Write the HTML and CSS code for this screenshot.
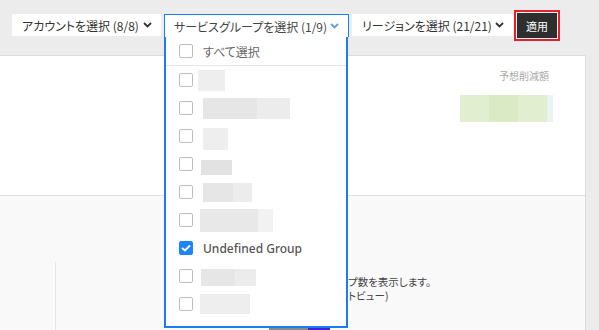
FILE: index.html
```html
<!DOCTYPE html>
<html lang="ja">
<head>
  <meta charset="UTF-8">
  <title>コスト削減</title>
  <link rel="stylesheet" href="styles.css">
</head>
<body>
  <div class="page">
    <div class="main">
      <div class="toolbar">
        <div class="select account">
          <span>アカウントを選択 (8/8)</span>
          <svg class="chev" width="9" height="6" viewBox="0 0 9 6"><polyline points="1,1 4.5,4.5 8,1" fill="none" stroke="#333" stroke-width="1.8"/></svg>
        </div>
        <div class="select group open">
          <span>サービスグループを選択 (1/9)</span>
          <svg class="chev" width="9" height="6" viewBox="0 0 9 6"><polyline points="1,1 4.5,4.5 8,1" fill="none" stroke="#5aa0ec" stroke-width="1.8"/></svg>
          <div class="panel">
            <div class="opt all">
              <span class="box"></span>
              <span class="lbl">すべて選択</span>
            </div>
            <div class="list">
              <div class="opt"><span class="box"></span><span class="blur" style="width:27px;height:21px;margin-left:-5px"></span></div>
              <div class="opt"><span class="box"></span><span class="blur b2" style="width:87px;height:21px"></span></div>
              <div class="opt"><span class="box"></span><span class="blur" style="width:25px;height:22px;margin-top:6px"></span></div>
              <div class="opt"><span class="box"></span><span class="blur dk" style="width:31px;height:15px;margin-top:6px;margin-left:-2px"></span></div>
              <div class="opt"><span class="box"></span><span class="blur b2" style="width:49px;height:19px"></span></div>
              <div class="opt"><span class="box"></span><span class="blur b3" style="width:73px;height:23px;margin-left:-3px"></span></div>
              <div class="opt"><span class="box checked"><svg width="10" height="8" viewBox="0 0 10 8"><polyline points="1,4 4,6.5 9,1.5" fill="none" stroke="#fff" stroke-width="2"/></svg></span><span class="lbl strong">Undefined Group</span></div>
              <div class="opt"><span class="box"></span><span class="blur b2" style="width:55px;height:17px;margin-top:2px;margin-left:-2px"></span></div>
              <div class="opt"><span class="box"></span><span class="blur" style="width:50px;height:20px;margin-left:-3px"></span></div>
            </div>
          </div>
        </div>
        <div class="select region">
          <span>リージョンを選択 (21/21)</span>
          <svg class="chev" width="9" height="6" viewBox="0 0 9 6"><polyline points="1,1 4.5,4.5 8,1" fill="none" stroke="#333" stroke-width="1.8"/></svg>
        </div>
        <button class="apply">適用</button>
      </div>

      <div class="summary">
        <div class="saving">
          <div class="saving-label">予想削減額</div>
          <div class="saving-value">
            <span class="seg s1"></span><span class="seg s2"></span><span class="seg s1"></span><span class="seg s3"></span>
          </div>
        </div>
      </div>

      <div class="detail">
        <div class="side"></div>
        <div class="content">
          <div class="desc">
            <p>プ数を表示します。</p>
            <p>トビュー)</p>
          </div>
          <div class="switch">
            <span class="sw off"></span><span class="sw on"></span>
          </div>
        </div>
      </div>
    </div>
  </div>
</body>
</html>
```

FILE: styles.css
```css
html,
body {
    padding: 0;
    margin: 0;
}

body {
    background: #ececec;
    font-family: "Noto Sans CJK JP", "Noto Sans", sans-serif;
    font-size: 12px;
    color: #333;
    font-feature-settings: "palt";
}

.page {
    height: 330px;
    overflow: hidden;
}

.main {
    width: 586px;
    height: 330px;
    display: flex;
    flex-direction: column;
}

.toolbar {
    height: 56px;
    flex: none;
    box-sizing: border-box;
    padding: 14px 0 0 12px;
    display: flex;
    align-items: flex-start;
    gap: 3px;
    border-bottom: 1px solid #dcdcdc;
}

.select {
    height: 22px;
    box-sizing: border-box;
    background: #fff;
    display: flex;
    align-items: center;
    padding: 0 9px 0 10px;
    white-space: nowrap;
    position: relative;
}

.select .chev {
    margin-left: auto;
}

.account {
    width: 149px;
}

.group {
    width: 185px;
    height: 23px;
    border: 1px solid #1a7ef2;
    border-bottom: none;
    padding-left: 9px;
    color: #444;
}

.region {
    width: 161px;
}

.apply {
    width: 46px;
    height: 31px;
    margin: -4px 0 0 -2px;
    border: 2px solid #e3202b;
    padding: 0;
    background: #2e2e2e;
    box-shadow: inset 0 0 0 1px #f2f2f2;
    color: #fff;
    font-family: inherit;
    font-size: 11px;
}

/* dropdown */
.panel {
    position: absolute;
    top: 22px;
    left: -1px;
    width: 184px;
    height: 291px;
    box-sizing: border-box;
    background: #fff;
    border: 2px solid #1a7ef2;
    border-top: none;
    z-index: 5;
}

.opt {
    height: 28px;
    display: flex;
    align-items: center;
    padding-left: 13px;
    gap: 10px;
}

.opt.all {
    border-bottom: 1px solid #e6e6e6;
    height: 28px;
}

.box {
    width: 14px;
    height: 14px;
    box-sizing: border-box;
    border: 1px solid #bdbdbd;
    border-radius: 2px;
    flex: none;
    display: flex;
    align-items: center;
    justify-content: center;
}

.box.checked {
    background: #1a85ff;
    border-color: #1a85ff;
}

.lbl {
    color: #666;
    font-size: 12px;
}

.lbl.strong {
    color: #555;
    font-family: "Noto Sans", sans-serif;
    font-weight: 500;
}

.blur {
    background: #eeeeee;
}

.blur.dk {
    background: #e2e2e2;
}

.blur.b2 {
    background: linear-gradient(90deg, #e6e6e6 0 62%, #ececec 62%);
}

.blur.b3 {
    background: linear-gradient(90deg, #e8e8e8 0 80%, #f2f2f3 80%);
}

/* summary card */
.summary {
    height: 139px;
    flex: none;
    background: #fff;
    border-right: 1px solid #dcdcdc;
    border-bottom: 1px solid #dcdcdc;
    display: flex;
    justify-content: flex-end;
}

.saving {
    padding: 12px 32px 0 0;
    display: flex;
    flex-direction: column;
    align-items: flex-end;
}

.saving-label {
    font-size: 10px;
    color: #aaa;
    margin-right: 4px;
}

.saving-value {
    margin-top: 12px;
    display: flex;
    height: 27px;
}

.seg {
    width: 29px;
}

.s1 {
    background: #e1eed0;
}

.s2 {
    background: #d9eac5;
}

.s3 {
    width: 6px;
    background: #e8f4ef;
}

/* detail area */
.detail {
    flex: 1;
    min-height: 0;
    background: #f9f9f9;
    border-right: 1px solid #dcdcdc;
    display: flex;
    padding-top: 66px;
}

.side {
    width: 55px;
    border-right: 1px solid #e6e6e6;
}

.content {
    flex: 1;
    display: flex;
    flex-direction: column;
    padding-left: 292px;
}

.desc {
    margin-top: 13px;
    font-size: 10.5px;
    color: #444;
    line-height: 14px;
}

.desc p {
    margin: 0;
    white-space: nowrap;
}

.switch {
    margin: auto 0 -2px -79px;
    display: flex;
    height: 4px;
    flex: none;
}

.sw {
    height: 4px;
}

.sw.off {
    width: 39px;
    background: #8a8a8a;
}

.sw.on {
    width: 22px;
    background: #4a1fd6;
}
```
